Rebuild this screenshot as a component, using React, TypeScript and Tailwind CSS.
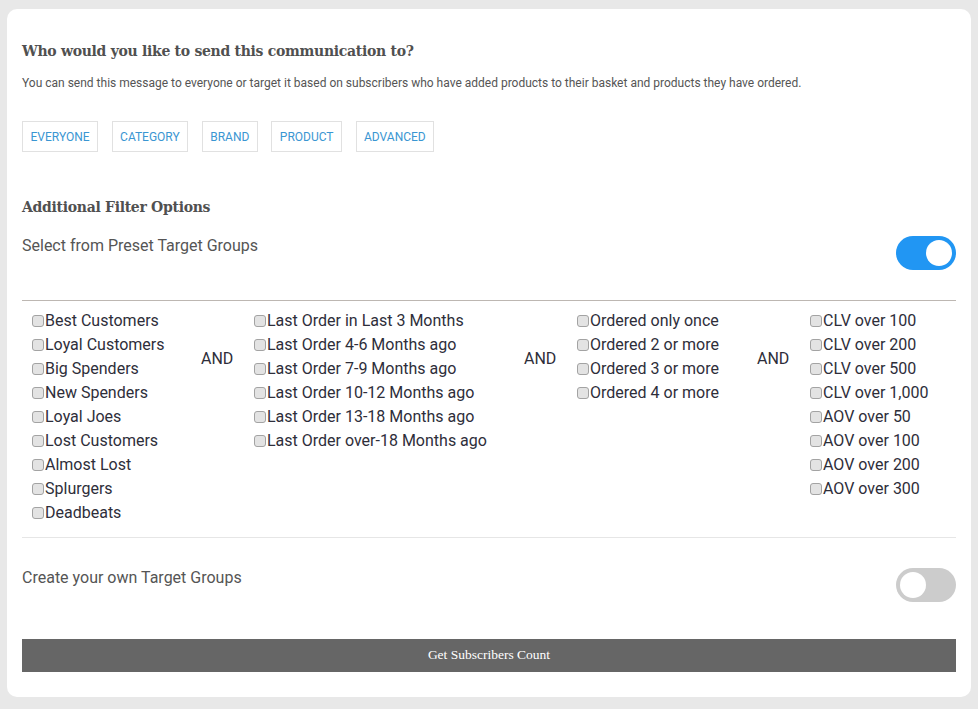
import { useState } from 'react'

const segments = [
  ['Best Customers', 'Loyal Customers', 'Big Spenders', 'New Spenders', 'Loyal Joes', 'Lost Customers', 'Almost Lost', 'Splurgers', 'Deadbeats'],
  ['Last Order in Last 3 Months', 'Last Order 4-6 Months ago', 'Last Order 7-9 Months ago', 'Last Order 10-12 Months ago', 'Last Order 13-18 Months ago', 'Last Order over-18 Months ago'],
  ['Ordered only once', 'Ordered 2 or more', 'Ordered 3 or more', 'Ordered 4 or more'],
  ['CLV over 100', 'CLV over 200', 'CLV over 500', 'CLV over 1,000', 'AOV over 50', 'AOV over 100', 'AOV over 200', 'AOV over 300'],
]

const targets = ['EVERYONE', 'CATEGORY', 'BRAND', 'PRODUCT', 'ADVANCED']

function Toggle({ on, onClick }: { on: boolean; onClick: () => void }) {
  return (
    <button
      onClick={onClick}
      className={`relative block h-[34px] w-[60px] shrink-0 rounded-full transition ${on ? 'bg-[#2196f3]' : 'bg-[#cccccc]'}`}
    >
      <span className={`absolute top-[4px] h-[26px] w-[26px] rounded-full bg-white transition-all ${on ? 'left-[30px]' : 'left-[4px]'}`} />
    </button>
  )
}

function CheckList({ items, width }: { items: string[]; width: string }) {
  return (
    <div className={`flex flex-col ${width}`}>
      {items.map((label) => (
        <label key={label} className="flex h-[24px] cursor-pointer items-center">
          <span className="h-[12px] w-[12px] shrink-0 rounded-[3px] border border-[#a3a3a3] bg-[#e3e3e3]" />
          <span className="ml-[1px] whitespace-nowrap">{label}</span>
        </label>
      ))}
    </div>
  )
}

function And() {
  return <div className="mt-[38px] h-[24px] w-[53px] leading-[24px]">AND</div>
}

export default function App() {
  const [preset, setPreset] = useState(true)
  const [own, setOwn] = useState(false)

  return (
    <div className="min-h-screen bg-[#e8e8e8] px-[7px] pt-[9px] font-['Roboto',sans-serif]">
      <div className="h-[688px] rounded-[10px] bg-white px-[15px] pt-[30px]">
        <h1 className="font-['DejaVu_Serif',serif] text-[14px] font-bold leading-[24px] tracking-[-0.3px] text-[#505050]">
          Who would you like to send this communication to?
        </h1>
        <p className="mt-[11px] text-[12px] leading-[18px] text-[#555]">
          You can send this message to everyone or target it based on subscribers who have added products to their basket and products they have ordered.
        </p>

        <div className="mt-[29px] flex gap-[13.5px]">
          {targets.map((t) => (
            <button key={t} className="h-[31px] border border-[#e1e1e1] px-[7.5px] text-[12px] text-[#3a96d2]">
              {t}
            </button>
          ))}
        </div>

        <h2 className="mt-[43px] font-['DejaVu_Serif',serif] text-[14px] font-bold leading-[24px] tracking-[-0.3px] text-[#505050]">
          Additional Filter Options
        </h2>
        <div className="mt-[14px] flex items-start justify-between">
          <span className="pt-[1px] text-[16px] leading-[24px] text-[#555]">Select from Preset Target Groups</span>
          <div className="mt-[3px] flex">
            <Toggle on={preset} onClick={() => setPreset(!preset)} />
          </div>
        </div>

        <div className="mt-[30px] border-t border-b border-t-[#bdb7b2] border-b-[#e6e6e6] pb-[12px] pl-[10px] pt-[8px] text-[16px] text-[#2e2e3a]">
          <div className="flex">
            <CheckList items={segments[0]} width="w-[169px]" />
            <And />
            <CheckList items={segments[1]} width="w-[270px]" />
            <And />
            <CheckList items={segments[2]} width="w-[180px]" />
            <And />
            <CheckList items={segments[3]} width="flex-1" />
          </div>
        </div>

        <div className="mt-[27px] flex items-start justify-between">
          <span className="pt-[1px] text-[16px] leading-[24px] text-[#555]">Create your own Target Groups</span>
          <div className="mt-[3px] flex">
            <Toggle on={own} onClick={() => setOwn(!own)} />
          </div>
        </div>

        <button className="mt-[37px] block h-[33px] w-full bg-[#666666] font-['Liberation_Serif',serif] text-[13.5px] text-white">
          Get Subscribers Count
        </button>
      </div>
    </div>
  )
}
